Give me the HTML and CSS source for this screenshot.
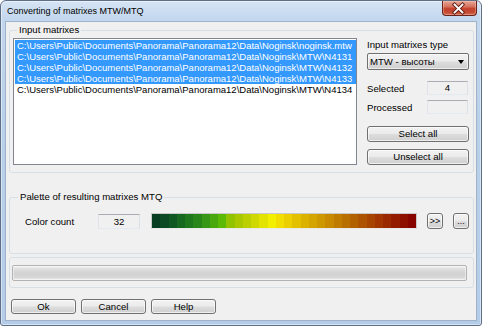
FILE: index.html
```html
<!DOCTYPE html>
<html>
<head>
<meta charset="utf-8">
<link rel="stylesheet" href="styles.css">
</head>
<body>
<div class="window">
  <div class="titlebar">
    <span class="title">Converting of matrixes MTW/MTQ</span>
    <div class="close">
      <svg width="35" height="15" viewBox="0 0 35 15">
        <path d="M13.5 3.5 L21.5 11.5 M21.5 3.5 L13.5 11.5" stroke="#5a1a12" stroke-width="3.6" stroke-linecap="square" fill="none"/>
        <path d="M13.5 3.5 L21.5 11.5 M21.5 3.5 L13.5 11.5" stroke="#ffffff" stroke-width="1.8" stroke-linecap="square" fill="none"/>
      </svg>
    </div>
  </div>
  <div class="client">
    <fieldset class="group group-input">
      <legend>Input matrixes</legend>
      <div class="group-body">
        <div class="listbox">
          <div class="item sel">C:\Users\Public\Documents\Panorama\Panorama12\Data\Noginsk\noginsk.mtw</div>
          <div class="item sel">C:\Users\Public\Documents\Panorama\Panorama12\Data\Noginsk\MTW\N4131</div>
          <div class="item sel">C:\Users\Public\Documents\Panorama\Panorama12\Data\Noginsk\MTW\N4132</div>
          <div class="item sel">C:\Users\Public\Documents\Panorama\Panorama12\Data\Noginsk\MTW\N4133</div>
          <div class="item">C:\Users\Public\Documents\Panorama\Panorama12\Data\Noginsk\MTW\N4134</div>
        </div>
        <div class="side">
          <div class="side-label">Input matrixes type</div>
          <div class="combo"><span class="combo-text">MTW - высоты</span><span class="combo-arrow"></span></div>
          <div class="field-row row-selected"><span>Selected</span><div class="edit">4</div></div>
          <div class="field-row row-processed"><span>Processed</span><div class="edit"></div></div>
          <div class="btn side-btn btn-select">Select all</div>
          <div class="btn side-btn btn-unselect">Unselect all</div>
        </div>
      </div>
    </fieldset>
    <fieldset class="group group-palette">
      <legend>Palette of resulting matrixes MTQ</legend>
      <div class="palette-row">
        <span class="cc-label">Color count</span>
        <div class="edit cc-edit">32</div>
        <div class="palette">
          <span></span><span></span><span></span><span></span><span></span><span></span><span></span><span></span>
          <span></span><span></span><span></span><span></span><span></span><span></span><span></span><span></span>
          <span></span><span></span><span></span><span></span><span></span><span></span><span></span><span></span>
          <span></span><span></span><span></span><span></span><span></span><span></span><span></span><span></span>
        </div>
        <div class="btn small-btn btn-next">&gt;&gt;</div>
        <div class="btn small-btn btn-more">...</div>
      </div>
    </fieldset>
    <div class="group group-progress">
      <div class="progress"></div>
    </div>
    <div class="footer">
      <div class="btn foot-btn">Ok</div>
      <div class="btn foot-btn">Cancel</div>
      <div class="btn foot-btn">Help</div>
    </div>
  </div>
</div>
</body>
</html>
```

FILE: styles.css
```css
html, body {
  margin: 0;
  padding: 0;
  background: #ffffff;
}

body {
  font-family: "Liberation Sans", Arial, sans-serif;
  font-size: 9.6px;
  color: #000;
}

.window {
  box-sizing: border-box;
  width: 482px;
  height: 326px;
  border: 1px solid #5f6f85;
  border-radius: 6px 6px 3px 3px;
  background: linear-gradient(to bottom, #d6e4f4 0px, #c3d7ee 18px, #b9d0ea 120px, #b3cce8 326px);
  box-shadow: inset 0 0 0 1px rgba(255, 255, 255, 0.45);
  display: flex;
  flex-direction: column;
}

.titlebar {
  height: 19px;
  display: flex;
  align-items: flex-start;
  position: relative;
}

.title {
  font-size: 9px;
  margin-left: 6px;
  margin-top: 5px;
  line-height: 11px;
  color: #000;
}

.close {
  margin-left: auto;
  margin-right: 4px;
  width: 35px;
  height: 15px;
  box-sizing: border-box;
  border: 1px solid #6b2218;
  border-top: none;
  border-radius: 0 0 4px 4px;
  background: linear-gradient(to bottom, #e6a595 0%, #d6735f 40%, #c2402b 55%, #c44a33 80%, #d26a50 100%);
  box-shadow: inset 0 0 0 1px rgba(255, 220, 210, 0.35);
  display: flex;
  align-items: center;
  justify-content: center;
}

.close svg {
  display: block;
  margin-left: -2px;
}

.client {
  flex: 1;
  margin: 1px 4px 4px 4px;
  border: 1px solid #9fb2c9;
  background: #f0f0f0;
  display: flex;
  flex-direction: column;
  padding: 0 2px 0 3px;
}

.group {
  border: 1px solid #d5dfe5;
  border-radius: 3px;
  margin: 0;
  min-width: 0;
}

.group legend {
  padding: 0 2px;
  margin-left: 4px;
  line-height: 12px;
  font-size: 9.6px;
}

.group-input {
  margin-top: 2px;
  padding: 2px 4px 7px 3px;
}

.group-body {
  display: flex;
  align-items: flex-start;
}

.listbox {
  box-sizing: border-box;
  width: 344px;
  height: 127px;
  border: 1px solid #82878f;
  background: #fff;
  padding: 1px;
  overflow: hidden;
}

.item {
  height: 11px;
  line-height: 11px;
  padding-left: 2px;
  white-space: nowrap;
  font-size: 9.5px;
  width: 500px;
}

.item.sel {
  background: #3399ff;
  color: #fff;
}

.side {
  margin-left: 10px;
  width: 102px;
  display: flex;
  flex-direction: column;
}

.side-label {
  line-height: 14px;
  height: 14px;
}

.combo {
  margin-top: 1px;
  box-sizing: border-box;
  height: 17px;
  border: 1px solid #707070;
  border-radius: 2px;
  background: linear-gradient(to bottom, #f2f2f2 0%, #ebebeb 48%, #dddddd 52%, #cfcfcf 100%);
  box-shadow: inset 0 0 0 1px rgba(255, 255, 255, 0.6);
  display: flex;
  align-items: center;
  padding-left: 2px;
  padding-right: 4px;
}

.combo-text {
  flex: 1;
  line-height: 15px;
}

.combo-arrow {
  width: 0;
  height: 0;
  border-left: 3.5px solid transparent;
  border-right: 3.5px solid transparent;
  border-top: 4px solid #000;
}

.field-row {
  display: flex;
  align-items: center;
  justify-content: space-between;
  height: 14px;
}

.row-selected {
  margin-top: 11px;
}

.row-processed {
  margin-top: 5px;
}

.edit {
  box-sizing: border-box;
  width: 41px;
  height: 14px;
  margin-right: 1px;
  border: 1px solid;
  border-color: #abadb3 #dbdfe6 #e3e9ef #e2e3ea;
  background: #f0f0f0;
  text-align: center;
  line-height: 12px;
}

.btn {
  box-sizing: border-box;
  border: 1px solid #707070;
  border-radius: 3px;
  background: linear-gradient(to bottom, #f2f2f2 0%, #ebebeb 48%, #dddddd 52%, #cfcfcf 100%);
  box-shadow: inset 0 0 0 1px rgba(255, 255, 255, 0.65);
  text-align: center;
  color: #000;
}

.side-btn {
  height: 16px;
  line-height: 14px;
}

.btn-select {
  margin-top: 12px;
}

.btn-unselect {
  margin-top: 7px;
}

.group-palette {
  margin-top: 18px;
  padding: 10px 4px 24px 4px;
}

.palette-row {
  display: flex;
  align-items: center;
  height: 16px;
}

.cc-label {
  width: 73px;
  margin-left: 11px;
}

.cc-edit {
  width: 42px;
  height: 15px;
  line-height: 13px;
  margin-right: 11px;
}

.palette {
  box-sizing: border-box;
  width: 266px;
  height: 16px;
  display: flex;
  border: 1px solid #c8c8c8;
  border-bottom-color: #e8e8e8;
  margin-right: 10px;
}

.palette span {
  flex: 1;
}

.palette span:nth-child(1) { background: #083d22; }
.palette span:nth-child(2) { background: #0b4a24; }
.palette span:nth-child(3) { background: #105823; }
.palette span:nth-child(4) { background: #176820; }
.palette span:nth-child(5) { background: #1f771e; }
.palette span:nth-child(6) { background: #29861b; }
.palette span:nth-child(7) { background: #379716; }
.palette span:nth-child(8) { background: #48a80e; }
.palette span:nth-child(9) { background: #5cb906; }
.palette span:nth-child(10) { background: #92c200; }
.palette span:nth-child(11) { background: #a9c800; }
.palette span:nth-child(12) { background: #bccf00; }
.palette span:nth-child(13) { background: #cfd800; }
.palette span:nth-child(14) { background: #e2e400; }
.palette span:nth-child(15) { background: #f2f000; }
.palette span:nth-child(16) { background: #f2de00; }
.palette span:nth-child(17) { background: #eccf00; }
.palette span:nth-child(18) { background: #e4c100; }
.palette span:nth-child(19) { background: #dcb200; }
.palette span:nth-child(20) { background: #d4a500; }
.palette span:nth-child(21) { background: #cd9800; }
.palette span:nth-child(22) { background: #c78a00; }
.palette span:nth-child(23) { background: #c07c00; }
.palette span:nth-child(24) { background: #b96e00; }
.palette span:nth-child(25) { background: #b36000; }
.palette span:nth-child(26) { background: #ad5200; }
.palette span:nth-child(27) { background: #a74400; }
.palette span:nth-child(28) { background: #a13600; }
.palette span:nth-child(29) { background: #9b2900; }
.palette span:nth-child(30) { background: #951b00; }
.palette span:nth-child(31) { background: #8e0f00; }
.palette span:nth-child(32) { background: #870400; }

.small-btn {
  width: 16px;
  height: 16px;
  line-height: 14px;
  font-size: 9px;
}

.btn-next {
  margin-right: 10px;
}

.group-progress {
  margin-top: 3px;
  padding: 7px 6px 6px 2px;
}

.progress {
  box-sizing: border-box;
  height: 16px;
  border: 1px solid #b2b2b2;
  border-radius: 2px;
  background: linear-gradient(to bottom, #f3f3f3 0%, #e0e0e0 20%, #d2d2d2 50%, #d6d6d6 80%, #ececec 100%);
  box-shadow: inset 0 0 0 1px rgba(255, 255, 255, 0.5);
}

.footer {
  display: flex;
  gap: 5px;
  margin-top: 11px;
  padding-left: 2px;
}

.foot-btn {
  width: 65px;
  height: 15px;
  line-height: 13px;
}
```
